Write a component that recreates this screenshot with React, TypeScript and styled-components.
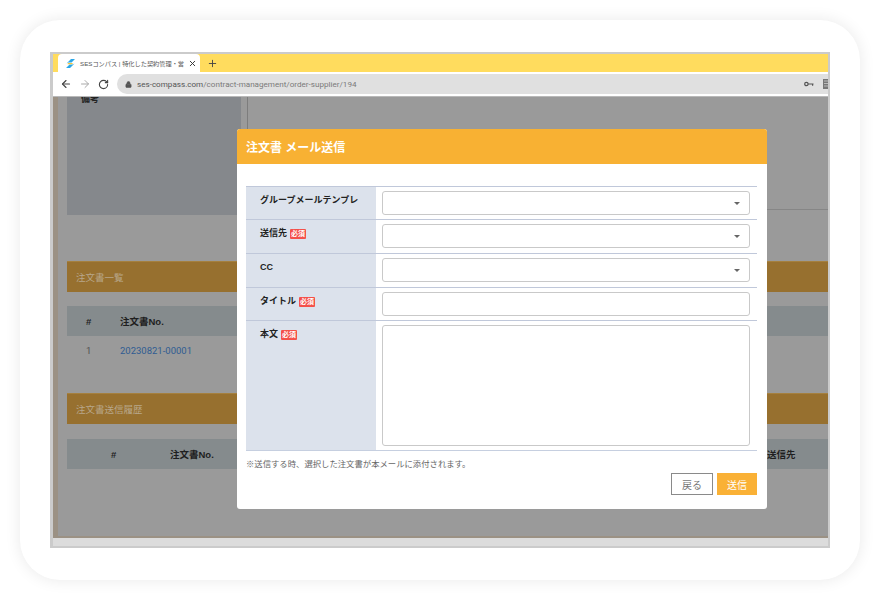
import React from 'react';
import styled, { createGlobalStyle } from 'styled-components';
import { ArrowLeft, ArrowRight, RotateCw, Lock, X, Plus } from 'lucide-react';

const FONT = `"Liberation Sans", "Noto Sans CJK JP", sans-serif`;
const ROBOTO = `Roboto, "Noto Sans CJK JP", sans-serif`;

const GlobalStyle = createGlobalStyle`
  html, body {
    margin: 0;
    padding: 0;
    background: #fff;
    font-family: ${FONT};
  }
  * {
    box-sizing: border-box;
  }
`;

const Page = styled.div`
  width: 880px;
  height: 600px;
  padding: 20px;
  overflow: hidden;
`;

const Card = styled.div`
  width: 840px;
  height: 560px;
  border-radius: 40px;
  background: #fff;
  box-shadow: 0 0 16px rgba(0, 0, 0, 0.09);
  padding: 32px 30px;
`;

const BrowserWindow = styled.div`
  width: 780px;
  height: 496px;
  border: solid #cbcbcb;
  border-width: 2px 2px 2px 3px;
  display: flex;
  flex-direction: column;
  overflow: hidden;
`;

const TabStrip = styled.div`
  height: 18px;
  flex: none;
  background: #ffdc5e;
  display: flex;
  align-items: stretch;
  padding-left: 5px;
`;

const Tab = styled.div`
  width: 142px;
  background: #fff;
  border-radius: 4px 4px 0 0;
  display: flex;
  align-items: center;
  padding: 0 6px 0 7px;
  gap: 4px;
  font-size: 6.2px;
  color: #555;
  white-space: nowrap;

  svg {
    flex: none;
  }
`;

const TabTitle = styled.span`
  flex: 1;
`;

const NewTab = styled.div`
  width: 25px;
  display: flex;
  align-items: center;
  justify-content: center;
  color: #444;
`;

const Toolbar = styled.div`
  height: 25px;
  flex: none;
  background: #fff;
  border-bottom: 1px solid #b9b9b9;
  display: flex;
  align-items: center;
  padding-left: 7px;
  gap: 7px;
`;

const NavIcon = styled.span<{ $muted?: boolean }>`
  display: flex;
  color: ${(p) => (p.$muted ? '#a9a9a9' : '#444')};
`;

const AddressBar = styled.div`
  flex: 1;
  height: 20px;
  margin-left: 1px;
  border-radius: 10px 0 0 10px;
  background: #e0e0e0;
  display: flex;
  align-items: center;
  padding-left: 8px;
  gap: 5px;
  font-family: ${ROBOTO};
  font-size: 8.1px;
  color: #7a7a7a;
  white-space: nowrap;
`;

const Host = styled.span`
  color: #555;
`;

const AddressRight = styled.div`
  margin-left: auto;
  display: flex;
  align-items: center;
  gap: 9px;
  margin-right: -1px;
  color: #555;
`;

const Viewport = styled.div`
  flex: 1;
  position: relative;
  background: #9a9a9a;
  border-left: 5px solid #9b9184;
  border-bottom: 2px solid #9b9184;
  overflow: hidden;
  padding-left: 9px;
  min-height: 0;
`;

const TopArea = styled.div`
  height: 118px;
  display: flex;
`;

const NotePanel = styled.div`
  width: 174px;
  background: #85888c;
  padding: 0 14px;
  font-size: 9px;
  font-weight: 700;
  color: #222;
  line-height: 4px;
`;

const NoteField = styled.div`
  flex: 1;
  margin-left: 6px;
  border-left: 1px solid #7d7d7d;
  border-bottom: 1px solid #868686;
  margin-bottom: 5px;
`;

const SectionBar = styled.div`
  height: 31px;
  background: #97702f;
  border-top: 1px solid #a5803f;
  display: flex;
  align-items: center;
  padding-left: 9px;
  padding-bottom: 1px;
  font-size: 9.5px;
  color: #b8a78b;
`;

const TableHead = styled.div`
  height: 30px;
  background: #858b8d;
  display: grid;
  align-items: center;
  font-size: 9.5px;
  font-weight: 700;
  color: #1f1f1f;
`;

const OrdersHead = styled(TableHead)`
  margin-top: 14px;
  grid-template-columns: 34px 1fr;
  padding-left: 19px;
`;

const HistoryHead = styled(TableHead)`
  margin-top: 15px;
  grid-template-columns: 59px 1fr 61px;
  padding-left: 44px;
`;

const OrderRow = styled.div`
  height: 28px;
  display: grid;
  grid-template-columns: 34px 1fr;
  padding-left: 19px;
  align-items: center;
  font-size: 9.5px;
  font-family: ${ROBOTO};
  color: #505050;
`;

const OrderLink = styled.span`
  color: #2f5c92;
`;

const SectionSpacer = styled.div<{ $h: number }>`
  height: ${(p) => p.$h}px;
`;

const Modal = styled.div`
  position: absolute;
  left: 179px;
  top: 32px;
  width: 530px;
  height: 380px;
  background: #fff;
  border-radius: 3px;
  overflow: hidden;
`;

const ModalHeader = styled.div`
  height: 35px;
  background: #f8b133;
  display: flex;
  align-items: center;
  padding: 0 0 1px 9px;
  font-size: 12px;
  font-weight: 700;
  color: #fff;
`;

const ModalBody = styled.div`
  padding: 22px 10px 0 9px;
`;

const FormRow = styled.div<{ $h: number }>`
  height: ${(p) => p.$h}px;
  display: grid;
  grid-template-columns: 130px 1fr;
  border-top: 1px solid #c0c8da;
`;

const LabelCell = styled.div`
  background: #dce2ec;
  padding: 7px 0 0 14px;
  font-size: 9px;
  font-weight: 700;
  color: #222;
  display: flex;
  align-items: flex-start;
  gap: 3px;
  white-space: nowrap;
  line-height: 13px;
`;

const RequiredBadge = styled.span`
  background: #f4504a;
  color: #fff;
  border-radius: 1px;
  font-size: 7px;
  line-height: 10px;
  height: 10px;
  margin-top: 2px;
  padding: 0 1px;
`;

const InputCell = styled.div`
  padding: 4px 7px 0 6px;
`;

const FieldBox = styled.div<{ $h?: number }>`
  height: ${(p) => p.$h ?? 24}px;
  border: 1px solid #c9c9c9;
  border-radius: 3px;
  background: #fff;
  display: flex;
  align-items: center;
  justify-content: flex-end;
  padding-right: 9px;
`;

const Caret = styled.span`
  width: 0;
  height: 0;
  border-left: 3px solid transparent;
  border-right: 3px solid transparent;
  border-top: 3px solid #666;
`;

const FormEnd = styled.div`
  border-top: 1px solid #c6cfe0;
`;

const Note = styled.p`
  margin: 8px 0 0;
  font-size: 8.35px;
  line-height: 11px;
  color: #666;
`;

const ButtonRow = styled.div`
  margin-top: 3px;
  display: flex;
  justify-content: flex-end;
  gap: 4px;
`;

const Button = styled.button<{ $primary?: boolean }>`
  width: ${(p) => (p.$primary ? 40 : 42)}px;
  height: 22px;
  padding: 0;
  font-family: ${FONT};
  font-size: 10px;
  border-radius: 0;
  border: ${(p) => (p.$primary ? 'none' : '1px solid #8a8a8a')};
  background: ${(p) => (p.$primary ? '#fab136' : '#fff')};
  color: ${(p) => (p.$primary ? '#fff' : '#777')};
`;

const BottomBar = styled.div`
  height: 8px;
  flex: none;
  background: #dcdcdc;
`;

function Favicon() {
  return (
    <svg width="11" height="11" viewBox="0 0 11 11">
      <path d="M1.5 5.5 L6 1 H10 L6.5 4.5 H3.5 Z" fill="#2aa7e8" />
      <path d="M9.5 5.5 L5 10 H1 L4.5 6.5 H7.5 Z" fill="#2aa7e8" />
      <path d="M3 5 H8 L7 6.2 H2.5 Z" fill="#f3c63d" />
    </svg>
  );
}

function KeyIcon() {
  return (
    <svg width="10" height="6" viewBox="0 0 10 6" fill="none" stroke="#555" strokeWidth="1.2">
      <circle cx="2.4" cy="3" r="1.7" />
      <path d="M4 3 H9.5 M8.6 3 V4.8" />
    </svg>
  );
}

function PageIcon() {
  return (
    <svg width="6" height="10" viewBox="0 0 6 10">
      <path d="M0 0 H6 V10 H0 Z" fill="#777" />
      <path d="M1 2 H5 M1 4.5 H5 M1 7 H5" stroke="#ccc" strokeWidth="0.8" />
    </svg>
  );
}

type Field = { label: string; required?: boolean; select?: boolean; rowH: number; boxH?: number };

const FIELDS: Field[] = [
  { label: 'グループメールテンプレ', select: true, rowH: 33 },
  { label: '送信先', required: true, select: true, rowH: 34 },
  { label: 'CC', select: true, rowH: 34 },
  { label: 'タイトル', required: true, rowH: 33 },
  { label: '本文', required: true, rowH: 130, boxH: 121 },
];

export default function App() {
  return (
    <Page>
      <GlobalStyle />
      <Card>
        <BrowserWindow>
          <TabStrip>
            <Tab>
              <Favicon />
              <TabTitle>SESコンパス | 特化した契約管理・営</TabTitle>
              <X size={9} color="#333" strokeWidth={2.5} />
            </Tab>
            <NewTab>
              <Plus size={11} strokeWidth={2} />
            </NewTab>
          </TabStrip>
          <Toolbar>
            <NavIcon>
              <ArrowLeft size={12} strokeWidth={2.2} />
            </NavIcon>
            <NavIcon $muted>
              <ArrowRight size={12} strokeWidth={2} />
            </NavIcon>
            <NavIcon>
              <RotateCw size={11} strokeWidth={2.4} />
            </NavIcon>
            <AddressBar>
              <Lock size={7} color="#555" fill="#555" />
              <span>
                <Host>ses-compass.com</Host>/contract-management/order-supplier/194
              </span>
              <AddressRight>
                <KeyIcon />
                <PageIcon />
              </AddressRight>
            </AddressBar>
          </Toolbar>
          <Viewport>
            <TopArea>
              <NotePanel>備考</NotePanel>
              <NoteField />
            </TopArea>
            <SectionSpacer $h={46} />
            <SectionBar>注文書一覧</SectionBar>
            <OrdersHead>
              <span>#</span>
              <span>注文書No.</span>
            </OrdersHead>
            <OrderRow>
              <span>1</span>
              <OrderLink>20230821-00001</OrderLink>
            </OrderRow>
            <SectionSpacer $h={29} />
            <SectionBar>注文書送信履歴</SectionBar>
            <HistoryHead>
              <span>#</span>
              <span>注文書No.</span>
              <span>送信先</span>
            </HistoryHead>
            <Modal>
              <ModalHeader>注文書 メール送信</ModalHeader>
              <ModalBody>
                {FIELDS.map((f) => (
                  <FormRow key={f.label} $h={f.rowH}>
                    <LabelCell>
                      {f.label}
                      {f.required && <RequiredBadge>必須</RequiredBadge>}
                    </LabelCell>
                    <InputCell>
                      <FieldBox $h={f.boxH}>{f.select && <Caret />}</FieldBox>
                    </InputCell>
                  </FormRow>
                ))}
                <FormEnd />
                <Note>※送信する時、選択した注文書が本メールに添付されます。</Note>
                <ButtonRow>
                  <Button>戻る</Button>
                  <Button $primary>送信</Button>
                </ButtonRow>
              </ModalBody>
            </Modal>
          </Viewport>
          <BottomBar />
        </BrowserWindow>
      </Card>
    </Page>
  );
}
